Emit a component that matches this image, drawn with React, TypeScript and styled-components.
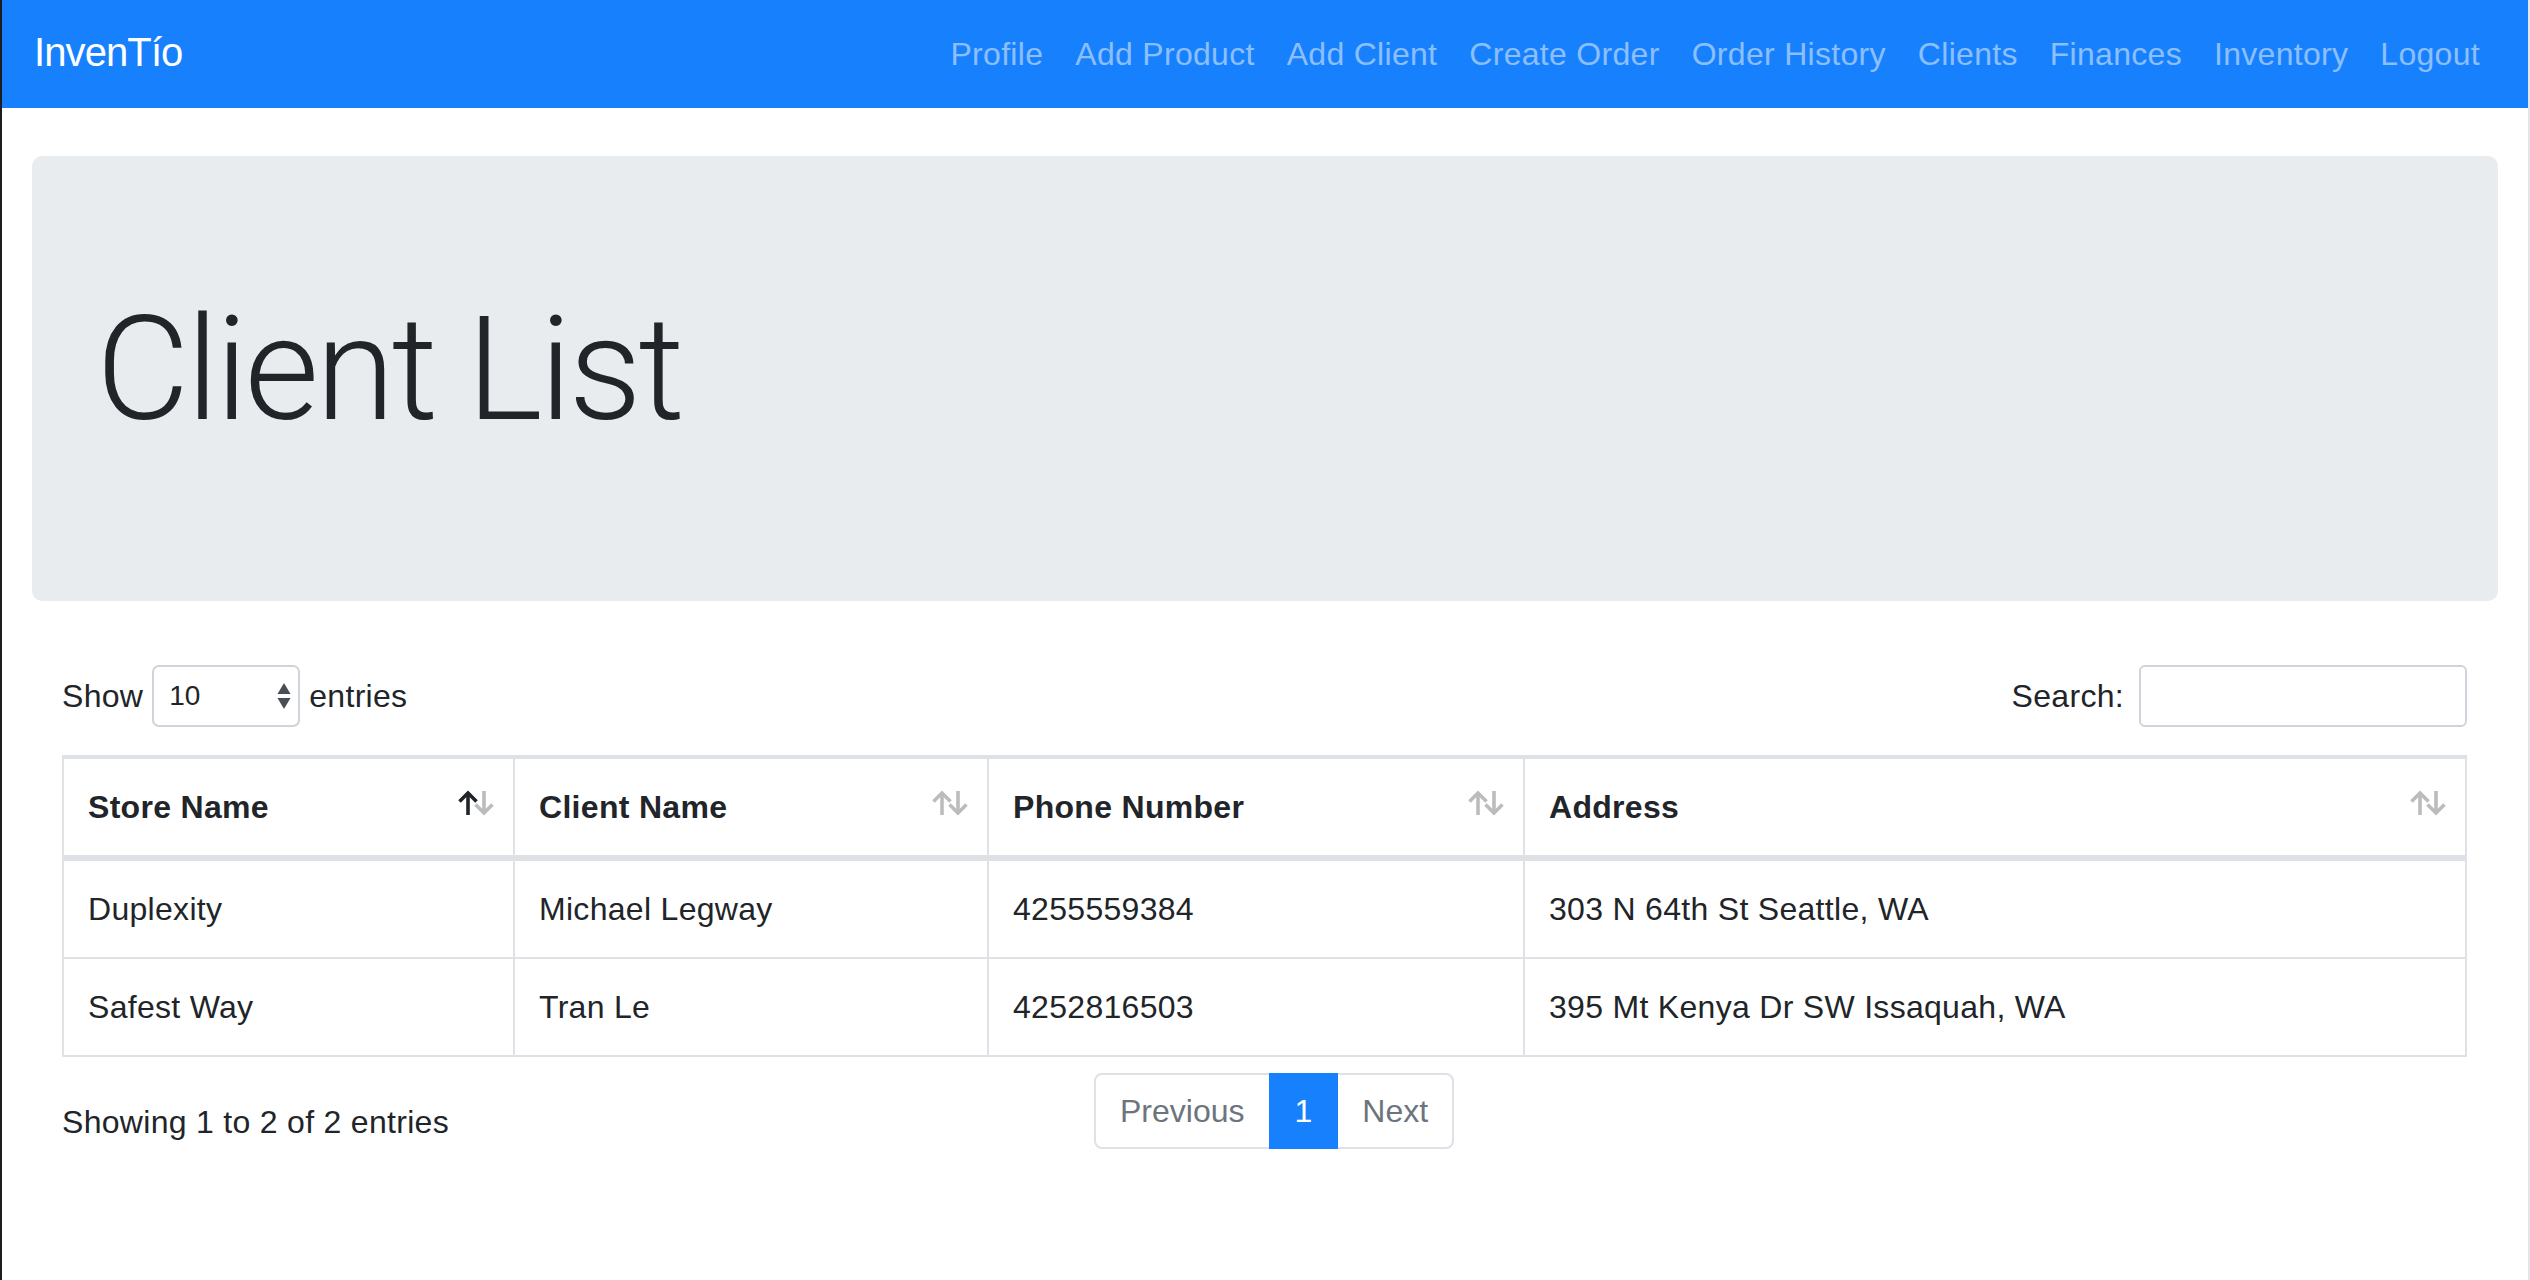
import React from "react";
import styled, { createGlobalStyle, css } from "styled-components";

const GlobalStyle = createGlobalStyle`
  *, *::before, *::after { box-sizing: border-box; }
  html, body { margin: 0; padding: 0; background: #fff; }
  body {
    font-family: "Liberation Sans", Arial, Helvetica, sans-serif;
    color: #212529;
    font-size: 32px;
    line-height: 1.5;
    letter-spacing: 0.3px;
  }
`;

const Page = styled.div`
  min-height: 1280px;
  border-left: 2px solid #1d1d1f;
  border-right: 2px solid #e5e5e5;
  background: #fff;
`;

const Navbar = styled.nav`
  height: 108px;
  background: #1780fd;
  display: flex;
  align-items: center;
  justify-content: space-between;
  padding: 0 32px;
`;

const Brand = styled.a`
  font-size: 40px;
  line-height: 1;
  letter-spacing: -0.9px;
  color: #fff;
  text-decoration: none;
  margin-top: -4px;
`;

const NavList = styled.ul`
  display: flex;
  list-style: none;
  margin: 0;
  padding: 0;
`;

const NavLink = styled.a`
  display: block;
  padding: 0 16px;
  font-size: 32px;
  line-height: 48px;
  letter-spacing: 0.3px;
  color: rgba(255, 255, 255, 0.5);
  text-decoration: none;
`;

const Jumbotron = styled.section`
  margin: 48px 30px 64px;
  padding: 128px 64px;
  background: #e9ecef;
  border-radius: 10px;
`;

const Title = styled.h1`
  margin: 0 0 16px;
  font-family: Roboto, "Liberation Sans", sans-serif;
  font-weight: 300;
  font-size: 144px;
  line-height: 1.2;
  letter-spacing: -3.2px;
  color: #212529;
`;

const Section = styled.div`
  padding: 0 61px 0 60px;
`;

const Controls = styled.div`
  display: flex;
  justify-content: space-between;
  align-items: center;
  height: 62px;
`;

const InlineLabel = styled.label<{ $gap: number }>`
  display: flex;
  align-items: center;
  gap: ${(p) => p.$gap}px;
  font-size: 32px;
  line-height: 48px;
`;

const SelectWrap = styled.div`
  position: relative;
  width: 148px;
  height: 62px;
`;

const Select = styled.select`
  appearance: none;
  -webkit-appearance: none;
  width: 100%;
  height: 100%;
  border: 2px solid #ced4da;
  border-radius: 7px;
  padding: 0 40px 0 15px;
  font-family: "Liberation Sans", Arial, sans-serif;
  font-size: 28px;
  color: #212529;
  background: #fff;
`;

const SelectArrows = styled.svg`
  position: absolute;
  right: 9px;
  top: 18px;
  pointer-events: none;
`;

const SearchInput = styled.input`
  width: 328px;
  height: 62px;
  border: 2px solid #ced4da;
  border-radius: 6px;
  padding: 0 16px;
  font-size: 28px;
  background: #fff;
`;

const Table = styled.table`
  width: 100%;
  margin-top: 28px;
  border-collapse: separate;
  border-spacing: 0;
  border: 2px solid #dee2e6;
  table-layout: fixed;
`;

const cellBorders = css`
  border-top: 2px solid #dee2e6;
  border-right: 2px solid #dee2e6;
  &:last-child {
    border-right: 0;
  }
`;

const Th = styled.th<{ $width?: number }>`
  position: relative;
  ${(p) => (p.$width ? `width: ${p.$width}px;` : "")}
  text-align: left;
  font-weight: 700;
  font-size: 32px;
  line-height: 48px;
  padding: 24px 60px 24px 24px;
  vertical-align: bottom;
  ${cellBorders}
  border-bottom: 4px solid #dee2e6;
  white-space: nowrap;
`;

const Td = styled.td`
  font-size: 32px;
  line-height: 48px;
  padding: 24px;
  vertical-align: top;
  ${cellBorders}
`;

const SortIcon = styled.svg`
  position: absolute;
  right: 16px;
  top: 31px;
`;

const Footer = styled.div`
  display: grid;
  grid-template-columns: 1032px auto;
  margin-top: 16px;
  align-items: start;
`;

const Info = styled.div`
  padding-top: 25px;
  font-size: 32px;
  line-height: 48px;
  white-space: nowrap;
`;

const Pagination = styled.ul`
  display: flex;
  list-style: none;
  margin: 0;
  padding: 0;
`;

const PageLink = styled.a<{ $active?: boolean; $first?: boolean; $last?: boolean }>`
  position: relative;
  display: block;
  margin-left: ${(p) => (p.$first ? 0 : -2)}px;
  padding: 16px 24px;
  font-size: 32px;
  line-height: 40px;
  letter-spacing: 0;
  border: 2px solid ${(p) => (p.$active ? "#1780fd" : "#dee2e6")};
  background: ${(p) => (p.$active ? "#1780fd" : "#fff")};
  color: ${(p) => (p.$active ? "#fff" : "#6c757d")};
  z-index: ${(p) => (p.$active ? 1 : 0)};
  text-decoration: none;
  border-radius: ${(p) => (p.$first ? "8px 0 0 8px" : p.$last ? "0 8px 8px 0" : "0")};
`;

const Sorter = ({ active }: { active?: boolean }) => (
  <SortIcon width="40" height="26" viewBox="0 0 40 26" fill="none">
    <g stroke="#212529" strokeWidth="3.6" strokeLinejoin="miter" strokeLinecap="butt" opacity={active ? 1 : 0.3}>
      <path d="M11 25V3" />
      <path d="M2.5 11.5L11 3l8.5 8.5" />
    </g>
    <g stroke="#212529" strokeWidth="3.6" strokeLinejoin="miter" strokeLinecap="butt" opacity={0.3}>
      <path d="M27 1v22" />
      <path d="M18.5 14.5L27 23l8.5-8.5" />
    </g>
  </SortIcon>
);

const navItems = [
  "Profile",
  "Add Product",
  "Add Client",
  "Create Order",
  "Order History",
  "Clients",
  "Finances",
  "Inventory",
  "Logout",
];

const columns = [
  { label: "Store Name", width: 451, active: true },
  { label: "Client Name", width: 474 },
  { label: "Phone Number", width: 536 },
  { label: "Address" },
];

const rows = [
  ["Duplexity", "Michael Legway", "4255559384", "303 N 64th St Seattle, WA"],
  ["Safest Way", "Tran Le", "4252816503", "395 Mt Kenya Dr SW Issaquah, WA"],
];

export default function App() {
  return (
    <>
      <GlobalStyle />
      <Page>
        <Navbar>
          <Brand href="#">InvenTío</Brand>
          <NavList>
            {navItems.map((n) => (
              <li key={n}>
                <NavLink href="#">{n}</NavLink>
              </li>
            ))}
          </NavList>
        </Navbar>
        <Jumbotron>
          <Title>Client List</Title>
        </Jumbotron>
        <Section>
          <Controls>
            <InlineLabel $gap={9}>
              Show
              <SelectWrap>
                <Select defaultValue="10">
                  <option value="10">10</option>
                  <option value="25">25</option>
                  <option value="50">50</option>
                  <option value="100">100</option>
                </Select>
                <SelectArrows width="14" height="26" viewBox="0 0 14 26">
                  <path d="M7 0L13.5 11H0.5Z" fill="#4a4f55" />
                  <path d="M0.5 15H13.5L7 26Z" fill="#4a4f55" />
                </SelectArrows>
              </SelectWrap>
              entries
            </InlineLabel>
            <InlineLabel $gap={15}>
              Search:
              <SearchInput type="search" />
            </InlineLabel>
          </Controls>
          <Table>
            <thead>
              <tr>
                {columns.map((c) => (
                  <Th key={c.label} $width={c.width}>
                    {c.label}
                    <Sorter active={c.active} />
                  </Th>
                ))}
              </tr>
            </thead>
            <tbody>
              {rows.map((r) => (
                <tr key={r[0]}>
                  {r.map((v, i) => (
                    <Td key={i}>{v}</Td>
                  ))}
                </tr>
              ))}
            </tbody>
          </Table>
          <Footer>
            <Info>Showing 1 to 2 of 2 entries</Info>
            <Pagination>
              <li>
                <PageLink href="#" $first>Previous</PageLink>
              </li>
              <li>
                <PageLink href="#" $active>1</PageLink>
              </li>
              <li>
                <PageLink href="#" $last>Next</PageLink>
              </li>
            </Pagination>
          </Footer>
        </Section>
      </Page>
    </>
  );
}
